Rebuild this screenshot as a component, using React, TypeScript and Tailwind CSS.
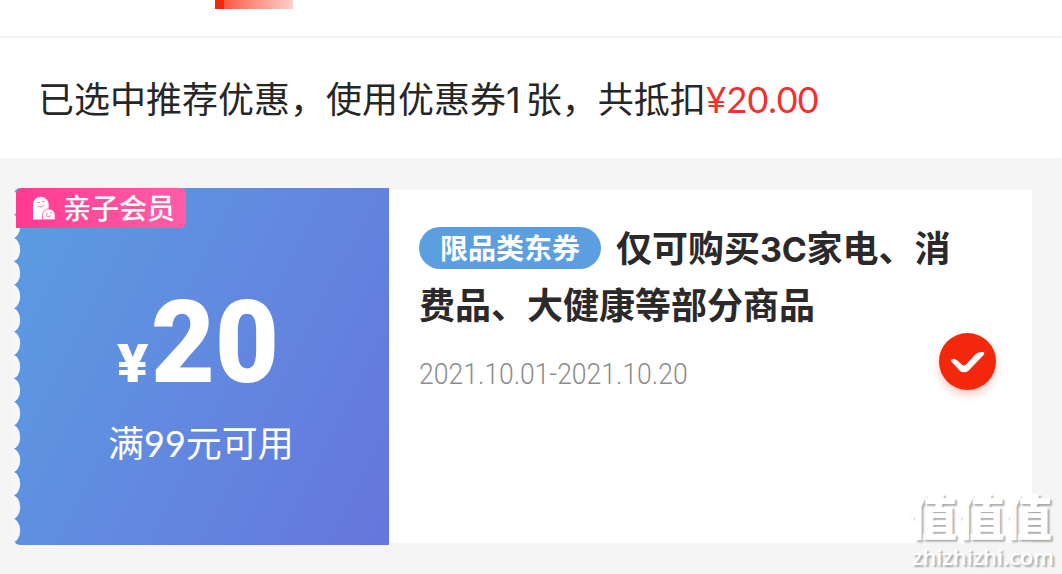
const SCALLOP_STEP = 23.4;
const SCALLOPS = Array.from({ length: 17 }, (_, i) => -8.5 + i * SCALLOP_STEP);

function FamilyIcon() {
  return (
    <svg viewBox="0 0 24 26" className="h-[26px] w-6 shrink-0" fill="none">
      <path d="M1 24.500V9.500a7.800 7.800 0 0 1 15.600 0V15L11 24.500Z" fill="#fff" />
      <path d="M10.500 24.800v-4.600a6.300 6.300 0 0 1 12.600 0v4.600Z" fill="#fff" stroke="#ff4b9b" strokeWidth=".8" />
      <path d="M6 7.5h1.500M10.500 6.500h1.500M6 11c1.500 1.500 4 1.500 5.500-.5M14.500 19h1M18.500 18h1M14.500 21c1 1 3.500 1 4.500-.5" stroke="#ff6aac" strokeWidth="1" strokeLinecap="round" />
    </svg>
  );
}

function ScallopedEdge() {
  return (
    <svg className="absolute left-0 top-0 h-[357px] w-2" viewBox="0 0 8 357">
      {SCALLOPS.map((cy) => (
        <ellipse key={cy} cx="-2" cy={cy} rx="8.2" ry="12" fill="#f5f7fc" />
      ))}
    </svg>
  );
}

function CouponAmount() {
  return (
    <div className="relative h-[357px] w-[375px] shrink-0 overflow-hidden rounded-l-md bg-[linear-gradient(117deg,#5a9de1_0%,#618be0_45%,#6676dc_100%)] text-white">
      <ScallopedEdge />
      <div className="absolute left-0.5 top-0 flex h-10 w-[170px] items-center gap-[7px] rounded-r-md rounded-tl-md bg-linear-to-r from-[#ff3a91] to-[#ff5da8] pl-4">
        <FamilyIcon />
        <span className="whitespace-nowrap pb-0.5 text-[28px] font-medium leading-[38px]">亲子会员</span>
      </div>
      <div className="flex h-[112px] items-baseline pl-[103px] pt-[95px] font-['Roboto','Noto_Sans_CJK_SC',sans-serif] font-bold">
        <span className="w-[34px] origin-left scale-x-110 text-[53px] font-black leading-none">¥</span>
        <span className="origin-left scale-x-[0.96] text-[115px] font-black leading-[120px]">20</span>
      </div>
      <p className="pl-[94px] pt-[113px] text-[36px] leading-[56px]">
        满<span className="font-['Lato',sans-serif]">99</span>元可用
      </p>
    </div>
  );
}

function SelectedMark() {
  return (
    <div className="flex size-[57px] items-center justify-center rounded-full bg-[#f2270c] shadow-[0_5px_9px_rgba(242,39,12,0.24)]">
      <svg width="35" height="25" viewBox="150 119 104 75">
        <path
          d="M154 157C150 150 158 147 165 150C174 153 181 164 188 168C192 170 196 167 200 163L224 137C231 130 238 128 248 128C253 128 254 133 250 137L207 182C200 190 187 192 179 184Z"
          fill="#fff"
        />
      </svg>
    </div>
  );
}

function Watermark() {
  return (
    <div className="absolute left-[909px] top-[482px] w-[153px] text-white [text-shadow:2px_2px_2px_rgba(0,0,0,0.32)]">
      <div className="text-[48px] font-black leading-[64px] tracking-[-0.5px]">值值值</div>
      <div className="pl-[3px] font-['Open_Sans',sans-serif] text-[22px] font-semibold leading-[20px] tracking-[-0.1px]">zhizhizhi.com</div>
    </div>
  );
}

export default function App() {
  return (
    <main className="relative h-[574px] w-[1062px] overflow-hidden bg-[#f5f5f5] font-['Noto_Sans_CJK_SC',sans-serif] text-[#262626]">
      <header className="h-[38px] border-b-2 border-[#f1f1f1] bg-white pl-[215px]">
        <div className="flex h-[9px] w-[78px]">
          <div className="w-[9px] bg-[#f2270c]" />
          <div className="flex-1 bg-linear-to-r from-[#f95743] to-[#fbcfca]" />
        </div>
      </header>

      <section className="flex h-[120px] items-center bg-white pb-0.5 pl-[38px]">
        <p className="whitespace-nowrap text-[36px] leading-[52px]">
          已选中推荐优惠，使用优惠券<span className="font-['Inter',sans-serif] leading-none tracking-[5px]">1</span>张，共抵扣
          <span className="font-['Lato',sans-serif] leading-none text-[#f2302c]">¥20.00</span>
        </p>
      </section>

      <section className="flex pl-3.5 pt-[30px]">
        <CouponAmount />
        <div className="mt-0.5 flex h-[353px] w-[643px] bg-white pl-[30px]">
          <div className="w-[520px] pt-7">
            <h2 className="h-[114px] w-[550px] text-[36px] font-bold leading-[57px] text-[#2b292a]">
              <span className="mr-[15px] mt-[9px] inline-block h-[42px] w-[182px] rounded-full bg-[#5b9fe0] text-center align-top text-[28px] leading-[41px] text-white">
                限品类东券
              </span>
              仅可购买<span className="font-['Inter',sans-serif] text-[34px] leading-none tracking-[-0.3px]">3C</span>家电、消费品、大健康等部分商品
            </h2>
            <p className="mt-[14px] origin-left scale-x-[0.885] whitespace-nowrap font-['Roboto',sans-serif] text-[30px] font-light leading-[56px] text-[#8c8c8c]">
              2021.10.01-2021.10.20
            </p>
          </div>
          <div className="pt-[143px]">
            <SelectedMark />
          </div>
        </div>
      </section>

      <Watermark />
    </main>
  );
}
